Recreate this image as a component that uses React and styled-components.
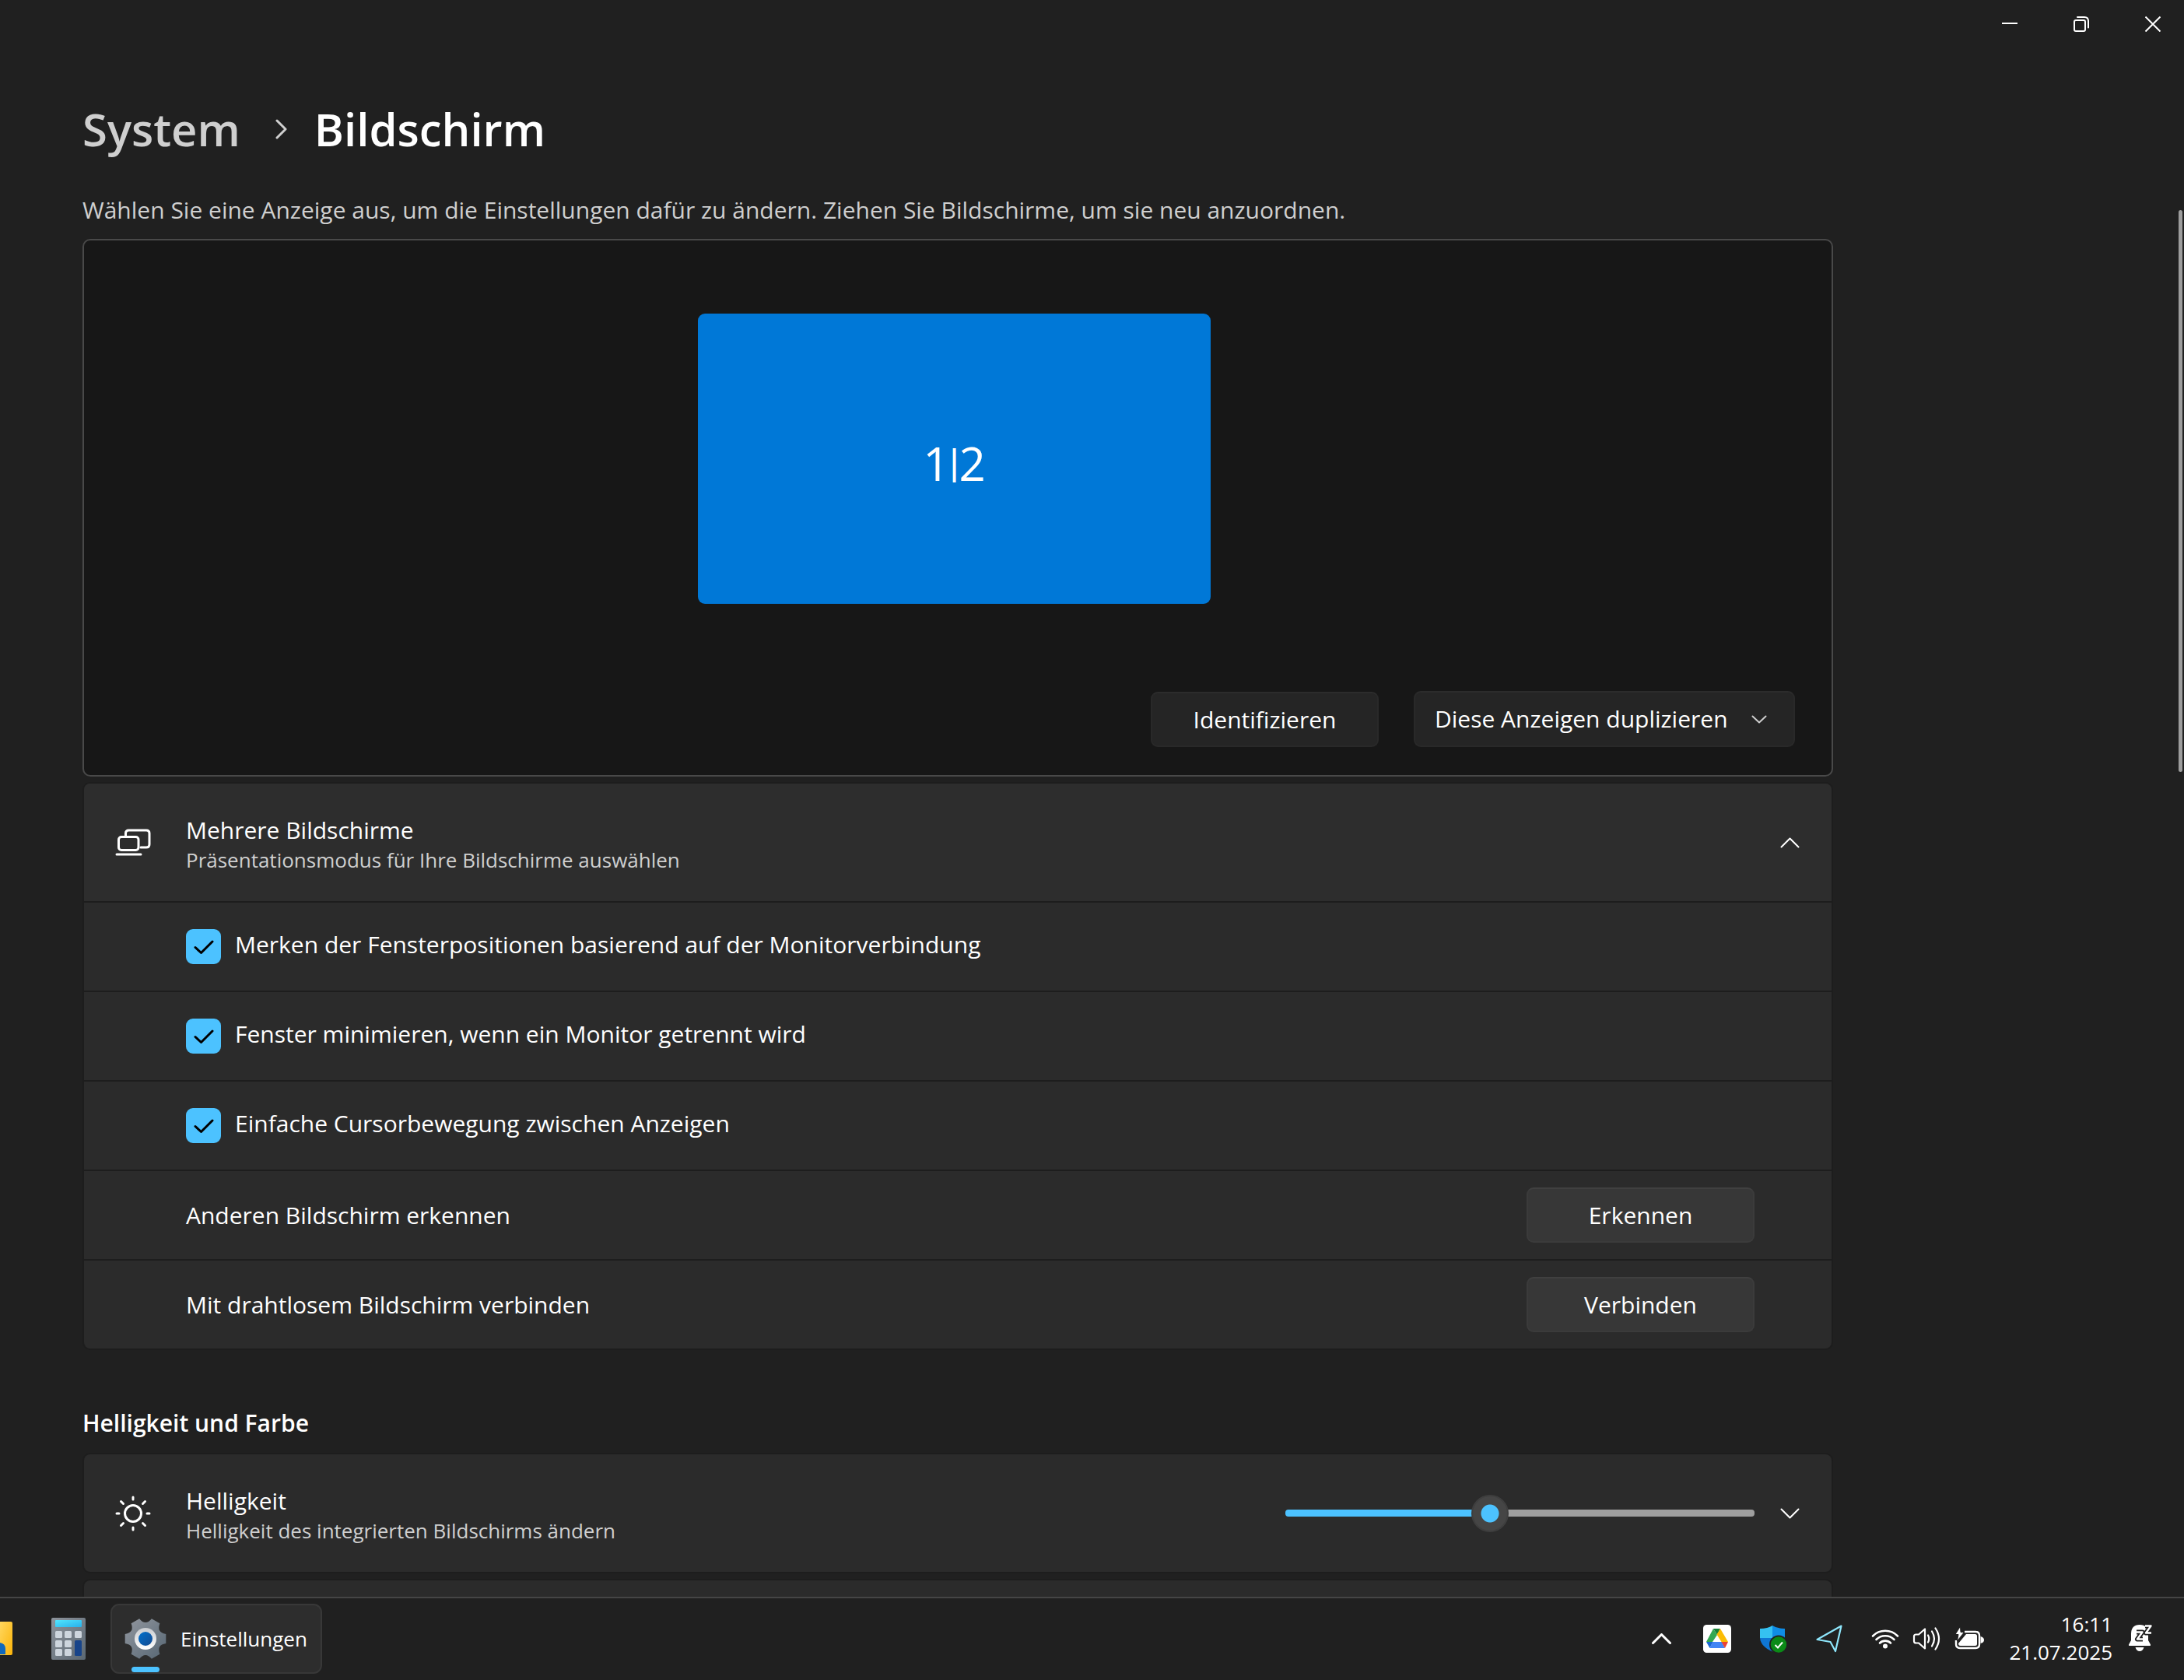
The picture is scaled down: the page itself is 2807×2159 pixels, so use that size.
import React, { useState } from "react";
import styled, { createGlobalStyle } from "styled-components";

const GlobalStyle = createGlobalStyle`
    * {
        box-sizing: border-box;
    }

    body {
        margin: 0;
        background: #202020;
        color: #fff;
        font-family: "Open Sans", "Noto Sans", sans-serif;
        font-size: 30px;
        line-height: 40px;
    }

    button, select, input {
        font: inherit;
        color: inherit;
        margin: 0;
    }

    svg {
        display: block;
        flex: none;
    }
`;

/* ---------- window ---------- */

const Desktop = styled.div`
    display: flex;
    flex-direction: column;
    height: 100vh;
    overflow: hidden;
`;

const TitleBar = styled.header`
    display: flex;
    flex: none;
    justify-content: flex-end;
    height: 62px;
`;

const CaptionButton = styled.button`
    display: flex;
    align-items: center;
    justify-content: center;
    width: 92px;
    padding: 0;
    border: 0;
    background: transparent;

    &:last-child {
        width: 80px;
        margin-left: 6px;
    }

    &:hover {
        background: #2d2d2d;
    }
`;

const Body = styled.div`
    display: flex;
    flex: 1;
    min-height: 0;
    overflow: hidden;
`;

const Main = styled.main`
    flex: 1;
    min-width: 0;
    padding: 62px 106px 0;
`;

const Content = styled.div`
    max-width: 2250px;
`;

const ScrollRail = styled.div`
    flex: none;
    width: 7px;
    padding-top: 208px;
`;

const ScrollThumb = styled.div`
    width: 5px;
    height: 722px;
    border-radius: 3px;
    background: #9d9d9d;
`;

/* ---------- page heading ---------- */

const Breadcrumb = styled.nav`
    display: flex;
    align-items: center;
    gap: 44px;
    font-size: 58px;
    font-weight: 600;
    line-height: 84px;
`;

const Crumb = styled.a`
    color: #cfcfcf;
    text-decoration: none;
`;

const PageTitle = styled.h1`
    margin: 0 0 0 -10px;
    font: inherit;
`;

const Description = styled.p`
    margin: 42px 0 17px;
    color: #cfcfcf;
`;

const SectionTitle = styled.h2`
    margin: 73px 0 17px;
    font-size: 30px;
    font-weight: 600;
    line-height: 42px;
`;

/* ---------- display arrangement ---------- */

const Arrangement = styled.section`
    padding: 94px 47px 36px;
    border: 2px solid #494949;
    border-radius: 10px;
    background: #171717;
`;

const Canvas = styled.div`
    display: flex;
    justify-content: center;
    padding-right: 9px;
`;

const Monitor = styled.button`
    width: 659px;
    height: 373px;
    padding: 10px 0 0;
    border: 0;
    border-radius: 9px;
    background: #0078d7;
    font-size: 60px;
    line-height: 84px;
`;

const MonitorDivider = styled.span`
    font-family: "Liberation Sans", sans-serif;
    font-size: 46px;
    line-height: 40px;
    vertical-align: 8px;
`;

const Actions = styled.div`
    display: flex;
    align-items: flex-end;
    justify-content: flex-end;
    gap: 45px;
    margin-top: 112px;
`;

const Button = styled.button`
    width: 293px;
    height: 71px;
    padding: 0;
    border: 2px solid ${props => props.$dark ? "#292929" : "#3b3b3b"};
    border-top-color: ${props => props.$dark ? "#2c2c2c" : "#404040"};
    border-radius: 9px;
    background: ${props => props.$dark ? "#252525" : "#373737"};
`;

const SelectBox = styled.div`
    display: grid;
    align-items: center;
    width: 490px;

    > * {
        grid-area: 1 / 1;
    }

    svg {
        justify-self: end;
        margin-right: 36px;
        pointer-events: none;
    }
`;

const Select = styled.select`
    width: 100%;
    height: 72px;
    padding: 0 60px 0 25px;
    border: 2px solid #292929;
    border-top-color: #2c2c2c;
    border-radius: 9px;
    background: #252525;
    appearance: none;
`;

/* ---------- cards ---------- */

const Card = styled.section`
    overflow: hidden;
    border: 2px solid #1d1d1d;
    border-radius: 10px;
    background: #2b2b2b;

    & + & {
        margin-top: 7px;
    }
`;

const CardStack = styled.div`
    margin-top: 7px;
`;

const CardHeader = styled.div`
    display: flex;
    align-items: center;
    height: 151px;
    padding: 0 41px 0 40px;
    background: ${props => props.$open ? "#2d2d2d" : "#2b2b2b"};
`;

const CardText = styled.div`
    flex: 1;
    margin-left: 45px;
    padding-top: 4px;
`;

const CardTitle = styled.div`
    line-height: 40px;
`;

const CardSub = styled.div`
    color: #cfcfcf;
    font-size: 26px;
    line-height: 36px;
`;

const ExpandButton = styled.button`
    margin-left: 33px;
    padding: 0;
    border: 0;
    background: transparent;
`;

const Row = styled.div`
    display: flex;
    align-items: center;
    justify-content: space-between;
    height: 115px;
    padding: 0 99px 0 131px;
    border-top: 2px solid #1d1d1d;
`;

const CheckLabel = styled.label`
    display: flex;
    align-items: center;
    gap: 18px;
`;

const CheckBox = styled.span`
    display: grid;
    place-items: center;

    > * {
        grid-area: 1 / 1;
    }

    input {
        width: 45px;
        height: 45px;
        border: 2px solid #9a9a9a;
        border-radius: 9px;
        background: #1f1f1f;
        appearance: none;
    }

    input:checked {
        border-color: #4cc2ff;
        background: #4cc2ff;
    }

    svg {
        pointer-events: none;
    }
`;

const CheckText = styled.span`
    padding-bottom: 6px;
`;

const Slider = styled.input`
    width: 603px;
    height: 48px;
    background: transparent;
    appearance: none;

    &::-webkit-slider-runnable-track {
        height: 9px;
        border-radius: 4px;
        background: linear-gradient(to right, #4cc2ff var(--fill), #9f9f9f var(--fill));
    }

    &::-webkit-slider-thumb {
        width: 48px;
        height: 48px;
        margin-top: -19px;
        border: 2px solid #3e3e3e;
        border-radius: 50%;
        background: radial-gradient(circle, #4cc2ff 11px, #454545 12px);
        appearance: none;
    }
`;

/* ---------- taskbar ---------- */

const TaskBar = styled.footer`
    display: flex;
    flex: none;
    align-items: center;
    justify-content: space-between;
    height: 107px;
    padding-bottom: 2px;
    border-top: 2px solid #454545;
    background: #202020;
    font-size: 26px;
    line-height: 36px;
`;

const TaskGroup = styled.div`
    display: flex;
    align-items: center;
`;

const TaskIcon = styled.button`
    padding: 0;
    border: 0;
    background: transparent;
    margin-left: ${props => props.$gap || 0}px;
`;

const ActiveTask = styled.button`
    position: relative;
    display: flex;
    align-items: center;
    gap: 18px;
    height: 90px;
    margin-left: 32px;
    padding: 0 17px 0 16px;
    border: 2px solid #383838;
    border-radius: 11px;
    background: #2d2d2d;

    &:after {
        content: "";
        position: absolute;
        bottom: 0;
        left: 25px;
        width: 36px;
        height: 7px;
        border-radius: 4px;
        background: #4cc2ff;
    }
`;

const TrayButton = styled.button`
    display: flex;
    align-items: center;
    justify-content: center;
    width: 72px;
    height: 90px;
    padding: 0;
    border: 0;
    background: transparent;
`;

const QuickSettings = styled.button`
    display: flex;
    align-items: center;
    gap: 17px;
    height: 90px;
    padding: 0 20px 0 18px;
    border: 0;
    background: transparent;
`;

const Clock = styled.button`
    display: flex;
    align-items: center;
    gap: 20px;
    padding: 0 40px 2px 12px;
    border: 0;
    background: transparent;
    text-align: right;
`;

/* ---------- icons ---------- */

const Chevron = ({ up, w = 25, h = 14, color = "#fff", stroke = 2 }) => (
    <svg width={w} height={h} viewBox={`0 0 ${w} ${h}`} fill="none" stroke={color} strokeWidth={stroke} strokeLinecap="round" strokeLinejoin="round">
        <path d={up ? `M1.5 ${h - 1.5} L${w / 2} 1.5 L${w - 1.5} ${h - 1.5}` : `M1.5 1.5 L${w / 2} ${h - 1.5} L${w - 1.5} 1.5`} />
    </svg>
);

const CrumbArrow = () => (
    <svg width="17" height="26" viewBox="0 0 17 26" fill="none" stroke="#cfcfcf" strokeWidth="3" strokeLinecap="round" strokeLinejoin="round">
        <path d="M3 2 L14 13 L3 24" />
    </svg>
);

const MonitorsIcon = () => (
    <svg width="46" height="36" viewBox="0 0 46 36" fill="none" stroke="#fff" strokeWidth="3" strokeLinecap="round">
        <path d="M13.5 9 V6 Q13.5 2 17.5 2 H40 Q44 2 44 6 V20 Q44 24 40 24 H33" />
        <rect x="4.5" y="10.5" width="25.5" height="17" rx="3.5" />
        <path d="M2 33 H33" />
    </svg>
);

const SunIcon = () => (
    <svg width="46" height="46" viewBox="-23 -23 46 46" fill="none" stroke="#fff" strokeWidth="3" strokeLinecap="round">
        <circle r="10.5" />
        <path d="M0 -21 V-18 M0 18 V21 M-21 0 H-18 M18 0 H21 M-15.5 -15.5 L-12.5 -12.5 M15.5 -15.5 L12.5 -12.5 M-15.5 15.5 L-12.5 12.5 M15.5 15.5 L12.5 12.5" />
    </svg>
);

const CheckMark = () => (
    <svg width="26" height="20" viewBox="0 0 26 20" fill="none" stroke="#000" strokeWidth="3" strokeLinecap="round" strokeLinejoin="round">
        <path d="M2 10.5 L9.5 17.5 L24 3" />
    </svg>
);

const FolderIcon = () => (
    <svg width="16" height="43" viewBox="0 0 16 43">
        <defs>
            <linearGradient id="folder" x1="0" y1="0" x2="1" y2="1">
                <stop offset="0" stopColor="#ffd75e" />
                <stop offset="1" stopColor="#fbb40a" />
            </linearGradient>
        </defs>
        <path d="M0 0 H14 Q16 0 16 2 V41 Q16 43 14 43 H0 Z" fill="url(#folder)" />
        <path d="M0 27 Q7 28 7 35 V42 H0 Z" fill="#0f68bd" />
    </svg>
);

const CalculatorIcon = () => (
    <svg width="44" height="54" viewBox="0 0 44 54">
        <defs>
            <linearGradient id="calc" x1="0" y1="0" x2="1" y2="1">
                <stop offset="0" stopColor="#8d939b" />
                <stop offset="1" stopColor="#5b6873" />
            </linearGradient>
            <linearGradient id="calcScreen" x1="0" y1="0" x2="1" y2="1">
                <stop offset="0" stopColor="#50e6ff" />
                <stop offset="1" stopColor="#29b0ea" />
            </linearGradient>
        </defs>
        <rect width="44" height="54" rx="2" fill="url(#calc)" />
        <rect x="5" y="3" width="34" height="9" rx="1" fill="url(#calcScreen)" />
        {[[5, 17], [17, 17], [30, 17], [5, 29], [17, 29], [5, 40], [17, 40]].map(([x, y]) => (
            <rect key={`${x}-${y}`} x={x} y={y} width="9" height="9" rx="1.5" fill="#cdd5dd" />
        ))}
        <rect x="30" y="29" width="9" height="20" rx="1.5" fill="#17448a" />
    </svg>
);

// six teeth, the valleys between them are curves
const polar = (deg, r) => `${(27 + r * Math.cos(deg * Math.PI / 180)).toFixed(1)} ${(26 + r * Math.sin(deg * Math.PI / 180)).toFixed(1)}`;
const gearPath = "M" + [0, 60, 120, 180, 240, 300].map(a =>
    `${polar(a - 13, 27)} L${polar(a + 13, 27)} Q${polar(a + 30, 16)} `
).join("") + polar(-13, 27) + " Z";

const GearIcon = () => (
    <svg width="54" height="52" viewBox="0 0 54 52">
        <defs>
            <linearGradient id="gear" x1="0" y1="0" x2="1" y2="1">
                <stop offset="0" stopColor="#92979f" />
                <stop offset="1" stopColor="#566673" />
            </linearGradient>
            <linearGradient id="gearRing" x1="0" y1="0" x2="0" y2="1">
                <stop offset="0" stopColor="#c9ccd0" />
                <stop offset="1" stopColor="#ffffff" />
            </linearGradient>
            <linearGradient id="gearHole" x1="0" y1="0" x2="1" y2="1">
                <stop offset="0" stopColor="#0070cc" />
                <stop offset="1" stopColor="#134a91" />
            </linearGradient>
        </defs>
        <path d={gearPath} fill="url(#gear)" />
        <circle cx="27" cy="26" r="14" fill="url(#gearRing)" />
        <circle cx="27" cy="26" r="9" fill="url(#gearHole)" />
    </svg>
);

const DriveIcon = () => (
    <svg width="36" height="36" viewBox="0 0 36 36">
        <rect width="36" height="36" rx="4.5" fill="#fff" />
        <path d="M13 5 H22 L18 13 Z" fill="#188038" />
        <path d="M13 5 L18 13 L12 22 H4 Z" fill="#34a853" />
        <path d="M22 5 L32 22 H23.5 L17.5 12.5 Z" fill="#fbbc04" />
        <path d="M4 22 H12.5 L8.5 30 Z" fill="#1967d2" />
        <path d="M12 22 H24 L28 30 H8.5 Z" fill="#4285f4" />
        <path d="M23.5 22 H32 L28 30 Z" fill="#ea4335" />
    </svg>
);

const ShieldIcon = () => (
    <svg width="36" height="36" viewBox="0 0 36 36">
        <path d="M1 5 Q11 5 17 1 V17 H1 Z" fill="#35c1f1" />
        <path d="M17 1 Q23 5 33 5 V17 H17 Z" fill="#0f8de6" />
        <path d="M1 17 H17 V34.5 Q2 28 1 17 Z" fill="#0f76d4" />
        <path d="M17 17 H33 Q32 28 17 34.5 Z" fill="#0a5cbf" />
        <circle cx="25" cy="25.5" r="12" fill="#202020" />
        <circle cx="25" cy="25.5" r="10.2" fill="#0b8a17" />
        <path d="M20.5 26 L24 29.5 L30 22.5" fill="none" stroke="#fff" strokeWidth="2" />
    </svg>
);

const LocationIcon = () => (
    <svg width="34" height="36" viewBox="0 0 34 36" fill="none" stroke="#8ee6fb" strokeWidth="2.2" strokeLinejoin="round">
        <path d="M32.5 1.5 L1.5 19 L18.5 22 L25 34 Z" />
    </svg>
);

const WifiIcon = () => (
    <svg width="36" height="28" viewBox="0 0 36 28" fill="none" stroke="#fff" strokeWidth="2.6" strokeLinecap="round">
        <path d="M2 10.5 A22.5 22.5 0 0 1 34 10.5" />
        <path d="M6.5 15 A16.3 16.3 0 0 1 29.5 15" />
        <path d="M11 19.5 A9.9 9.9 0 0 1 25 19.5" />
        <circle cx="18" cy="23.5" r="3" fill="#fff" stroke="none" />
    </svg>
);

const SpeakerIcon = () => (
    <svg width="37" height="32" viewBox="0 0 37 32" fill="none" stroke="#fff" strokeWidth="2.2" strokeLinecap="round" strokeLinejoin="round">
        <path d="M2 13 Q2 10.5 4.5 10.5 H8 L16 3.5 V28.5 L8 21.5 H4.5 Q2 21.5 2 19 Z" />
        <path d="M20 11.5 Q22.5 16 20 20.5" />
        <path d="M25 6.5 Q31 16 25 25.5" />
        <path d="M29.5 2.5 Q38.5 16 29.5 29.5" />
    </svg>
);

const BatteryIcon = () => (
    <svg width="38" height="32" viewBox="0 0 38 32">
        <path d="M13 7 H27 Q32 7 32 12 V23 Q32 28 27 28 H7 Q2 28 2 23 V18" fill="none" stroke="#fff" strokeWidth="2.4" />
        <path d="M33.5 13 Q38 14 38 17.5 Q38 21 33.5 22 Z" fill="#fff" />
        <path d="M15 10 H26.5 Q29 10 29 12.5 V22.5 Q29 25 26.5 25 H7.5 Q5 25 5 22 Z" fill="#fff" />
        <path d="M7.5 0 L1 10.5 H5 L3.5 19 L12.5 7.5 H8 Z" fill="#fff" stroke="#202020" strokeWidth="1" />
    </svg>
);

const BellIcon = () => (
    <svg width="32" height="36" viewBox="0 0 32 36">
        <path d="M15 1 Q26 1 26 13 V21 L29 26.5 Q29.5 28 28 28 H2 Q0.5 28 1 26.5 L4 21 V13 Q4 1 15 1 Z" fill="#fff" />
        <path d="M9.5 30 H20.5 Q19 35 15 35 Q11 35 9.5 30 Z" fill="#fff" />
        <g fill="none" strokeLinejoin="round">
            <path d="M22 2.5 H29.5 L23 11.5 H30 M11 10.5 H18.5 L12 19.5 H19" stroke="#202020" strokeWidth="6" />
            <path d="M22 2.5 H29.5 L23 11.5 H30" stroke="#fff" strokeWidth="2.4" />
            <path d="M11 10.5 H18.5 L12 19.5 H19" stroke="#fff" strokeWidth="2.4" />
        </g>
    </svg>
);

/* ---------- parts ---------- */

function CheckRow({ label }) {
    const [checked, setChecked] = useState(true);

    return (
        <Row>
            <CheckLabel>
                <CheckBox>
                    <input type="checkbox" checked={checked} onChange={() => setChecked(!checked)} />
                    {checked && <CheckMark />}
                </CheckBox>
                <CheckText>{label}</CheckText>
            </CheckLabel>
        </Row>
    );
}

function ActionRow({ label, action }) {
    return (
        <Row>
            <span>{label}</span>
            <Button>{action}</Button>
        </Row>
    );
}

export default function App() {
    const [open, setOpen] = useState(true);
    const [brightness, setBrightness] = useState(43);

    return (
        <Desktop>
            <GlobalStyle />
            <TitleBar>
                <CaptionButton aria-label="Minimieren">
                    <svg width="20" height="20" viewBox="0 0 20 20" stroke="#fff" strokeWidth="2"><path d="M0 9 H20" /></svg>
                </CaptionButton>
                <CaptionButton aria-label="Verkleinern">
                    <svg width="20" height="20" viewBox="0 0 20 20" fill="none" stroke="#fff" strokeWidth="2" strokeLinecap="round">
                        <rect x="1" y="5" width="14" height="14" rx="2" />
                        <path d="M5 1 H14 Q19 1 19 6 V14.5" />
                    </svg>
                </CaptionButton>
                <CaptionButton aria-label="Schließen">
                    <svg width="20" height="20" viewBox="0 0 20 20" stroke="#fff" strokeWidth="2"><path d="M0.5 0.5 L19.5 19.5 M19.5 0.5 L0.5 19.5" /></svg>
                </CaptionButton>
            </TitleBar>

            <Body>
                <Main>
                    <Content>
                        <Breadcrumb>
                            <Crumb href="#system">System</Crumb>
                            <CrumbArrow />
                            <PageTitle>Bildschirm</PageTitle>
                        </Breadcrumb>
                        <Description>
                            Wählen Sie eine Anzeige aus, um die Einstellungen dafür zu ändern. Ziehen Sie Bildschirme, um sie neu anzuordnen.
                        </Description>

                        <Arrangement>
                            <Canvas>
                                <Monitor>1<MonitorDivider>|</MonitorDivider>2</Monitor>
                            </Canvas>
                            <Actions>
                                <Button $dark>Identifizieren</Button>
                                <SelectBox>
                                    <Select aria-label="Anzeigemodus">
                                        <option>Diese Anzeigen duplizieren</option>
                                    </Select>
                                    <Chevron w={20} h={11} color="#cfcfcf" />
                                </SelectBox>
                            </Actions>
                        </Arrangement>

                        <CardStack>
                            <Card>
                                <CardHeader $open={open}>
                                    <MonitorsIcon />
                                    <CardText>
                                        <CardTitle>Mehrere Bildschirme</CardTitle>
                                        <CardSub>Präsentationsmodus für Ihre Bildschirme auswählen</CardSub>
                                    </CardText>
                                    <ExpandButton aria-label="Mehrere Bildschirme" aria-expanded={open} onClick={() => setOpen(!open)}>
                                        <Chevron up={open} />
                                    </ExpandButton>
                                </CardHeader>
                                {open && (
                                    <>
                                        <CheckRow label="Merken der Fensterpositionen basierend auf der Monitorverbindung" />
                                        <CheckRow label="Fenster minimieren, wenn ein Monitor getrennt wird" />
                                        <CheckRow label="Einfache Cursorbewegung zwischen Anzeigen" />
                                        <ActionRow label="Anderen Bildschirm erkennen" action="Erkennen" />
                                        <ActionRow label="Mit drahtlosem Bildschirm verbinden" action="Verbinden" />
                                    </>
                                )}
                            </Card>
                        </CardStack>

                        <SectionTitle>Helligkeit und Farbe</SectionTitle>
                        <Card>
                            <CardHeader>
                                <SunIcon />
                                <CardText>
                                    <CardTitle>Helligkeit</CardTitle>
                                    <CardSub>Helligkeit des integrierten Bildschirms ändern</CardSub>
                                </CardText>
                                <Slider
                                    type="range"
                                    aria-label="Helligkeit"
                                    value={brightness}
                                    onChange={e => setBrightness(Number(e.target.value))}
                                    style={{ "--fill": `${brightness}%` }}
                                />
                                <ExpandButton aria-label="Helligkeit erweitern">
                                    <Chevron />
                                </ExpandButton>
                            </CardHeader>
                        </Card>
                        <Card>
                            <CardHeader />
                        </Card>
                    </Content>
                </Main>
                <ScrollRail>
                    <ScrollThumb />
                </ScrollRail>
            </Body>

            <TaskBar>
                <TaskGroup>
                    <TaskIcon aria-label="Explorer"><FolderIcon /></TaskIcon>
                    <TaskIcon aria-label="Rechner" $gap={50}><CalculatorIcon /></TaskIcon>
                    <ActiveTask>
                        <GearIcon />
                        Einstellungen
                    </ActiveTask>
                </TaskGroup>
                <TaskGroup>
                    <TrayButton aria-label="Ausgeblendete Symbole"><Chevron up stroke={3} /></TrayButton>
                    <TrayButton aria-label="Google Drive"><DriveIcon /></TrayButton>
                    <TrayButton aria-label="Windows-Sicherheit"><ShieldIcon /></TrayButton>
                    <TrayButton aria-label="Standort"><LocationIcon /></TrayButton>
                    <QuickSettings aria-label="Schnelleinstellungen">
                        <WifiIcon />
                        <SpeakerIcon />
                        <BatteryIcon />
                    </QuickSettings>
                    <Clock>
                        <span>16:11<br />21.07.2025</span>
                        <BellIcon />
                    </Clock>
                </TaskGroup>
            </TaskBar>
        </Desktop>
    );
}
